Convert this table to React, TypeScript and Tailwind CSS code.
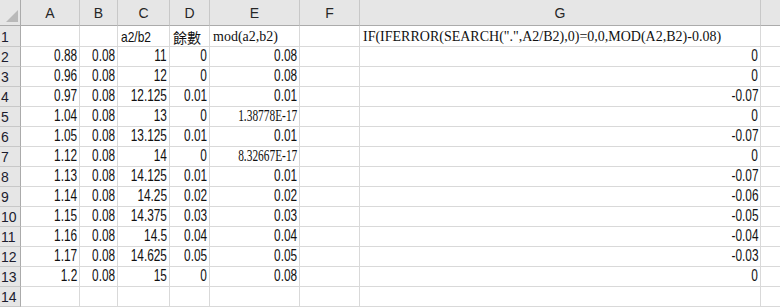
import React from "react";

type Cell = { v: string; k?: "num" | "ser" | "sans" | "cjk" | "sernum" };

const NUM = "font-['Liberation_Sans',sans-serif] text-[16px] justify-end pr-[2px]";
const SER = "font-['Liberation_Serif','Noto_Sans_CJK_TC',serif] text-[14px] justify-start pl-[3px]";
const SANS = "font-['Liberation_Sans',sans-serif] text-[15px] justify-start pl-[3px]";
const CJK = "font-['Noto_Sans_CJK_TC',sans-serif] text-[14px] justify-start pl-[3px]";
const SERNUM = "font-['Liberation_Serif',serif] text-[17px] justify-end pr-[2px]";

const n = (v: string): Cell => ({ v, k: "num" });
const s = (v: string): Cell => ({ v, k: "ser" });
const e: Cell = { v: "" };

const rows: Cell[][] = [
  [e, e, { v: "a2/b2", k: "sans" }, { v: "餘數", k: "cjk" }, s("mod(a2,b2)"), e, s('IF(IFERROR(SEARCH(".",A2/B2),0)=0,0,MOD(A2,B2)-0.08)')],
  [n("0.88"), n("0.08"), n("11"), n("0"), n("0.08"), e, n("0")],
  [n("0.96"), n("0.08"), n("12"), n("0"), n("0.08"), e, n("0")],
  [n("0.97"), n("0.08"), n("12.125"), n("0.01"), n("0.01"), e, n("-0.07")],
  [n("1.04"), n("0.08"), n("13"), n("0"), { v: "1.38778E-17", k: "sernum" }, e, n("0")],
  [n("1.05"), n("0.08"), n("13.125"), n("0.01"), n("0.01"), e, n("-0.07")],
  [n("1.12"), n("0.08"), n("14"), n("0"), { v: "8.32667E-17", k: "sernum" }, e, n("0")],
  [n("1.13"), n("0.08"), n("14.125"), n("0.01"), n("0.01"), e, n("-0.07")],
  [n("1.14"), n("0.08"), n("14.25"), n("0.02"), n("0.02"), e, n("-0.06")],
  [n("1.15"), n("0.08"), n("14.375"), n("0.03"), n("0.03"), e, n("-0.05")],
  [n("1.16"), n("0.08"), n("14.5"), n("0.04"), n("0.04"), e, n("-0.04")],
  [n("1.17"), n("0.08"), n("14.625"), n("0.05"), n("0.05"), e, n("-0.03")],
  [n("1.2"), n("0.08"), n("15"), n("0"), n("0.08"), e, n("0")],
  [e, e, e, e, e, e, e],
];

function Content({ c }: { c: Cell }) {
  if (!c.v) return null;
  switch (c.k) {
    case "num":
      return <span className="inline-block origin-right scale-x-[0.74]">{c.v}</span>;
    case "sernum":
      return <span className="inline-block origin-right scale-x-[0.67]">{c.v}</span>;
    case "sans":
      return <span className="inline-block origin-left scale-x-[0.8]">{c.v}</span>;
    default:
      return <span>{c.v}</span>;
  }
}

function cls(c: Cell) {
  switch (c.k) {
    case "num":
      return NUM;
    case "sernum":
      return SERNUM;
    case "ser":
      return SER;
    case "sans":
      return SANS;
    case "cjk":
      return CJK;
    default:
      return "";
  }
}

const letters = ["A", "B", "C", "D", "E", "F", "G"];

export default function App() {
  return (
    <div className="w-[780px] h-[307px] overflow-hidden bg-white text-[#111]">
      <div className="grid grid-cols-[21px_59px_38px_52px_40px_90px_60px_401px_1fr]">
        {/* header row */}
        <div className="h-[26px] bg-[#e6e6e6] border-r border-b border-[#ababab] relative">
          <svg className="absolute left-0 top-0" width="21" height="26" viewBox="0 0 21 26">
            <polygon points="18,10 18,22 6,22" fill="#b9b9b9" />
          </svg>
        </div>
        {letters.map((l) => (
          <div
            key={l}
            className="h-[26px] bg-[#e6e6e6] border-r border-b border-r-[#c8c8c8] border-b-[#ababab] flex items-center justify-center pt-[2px] font-['Liberation_Sans',sans-serif] text-[14px] text-[#262626]"
          >
            {l}
          </div>
        ))}
        <div className="h-[26px] bg-[#e6e6e6] border-b border-[#ababab]" />

        {rows.map((r, ri) => (
          <React.Fragment key={ri}>
            <div
              className={`${ri === 0 ? "h-[21px]" : "h-[20px]"} bg-[#e6e6e6] border-r border-b border-r-[#ababab] border-b-[#c8c8c8] flex items-end pb-[2px] pl-[1px] font-['Liberation_Sans',sans-serif] text-[14px] leading-none text-[#1c1c2e]`}
            >
              {ri + 1}
            </div>
            {r.map((c, ci) => (
              <div
                key={ci}
                className={`${ri === 0 ? "h-[21px]" : "h-[20px]"} border-r border-b border-[#d9d9d9] flex items-end pb-[2px] leading-none whitespace-nowrap overflow-visible ${cls(c)}`}
              >
                <Content c={c} />
              </div>
            ))}
            <div className={`${ri === 0 ? "h-[21px]" : "h-[20px]"} border-b border-[#d9d9d9]`} />
          </React.Fragment>
        ))}
      </div>
    </div>
  );
}
